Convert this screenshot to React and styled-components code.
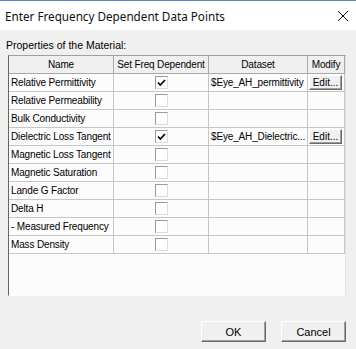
import { Fragment } from 'react';
import styled, { createGlobalStyle } from 'styled-components';

const GlobalStyle = createGlobalStyle`
	html, body {
		margin: 0;
		padding: 0;
		background: #f0f0f0;
	}
	* {
		box-sizing: border-box;
	}
`;

const materialRows = [
	{ name: 'Relative Permittivity', checked: true, dataset: '$Eye_AH_permittivity' },
	{ name: 'Relative Permeability' },
	{ name: 'Bulk Conductivity' },
	{ name: 'Dielectric Loss Tangent', checked: true, dataset: '$Eye_AH_Dielectric...' },
	{ name: 'Magnetic Loss Tangent' },
	{ name: 'Magnetic Saturation' },
	{ name: 'Lande G Factor' },
	{ name: 'Delta H' },
	{ name: '-  Measured Frequency' },
	{ name: 'Mass Density' },
];

// window frame
const Dialog = styled.div`
	width: 356px;
	height: 349px;
	display: flex;
	flex-direction: column;
	background: #f0f0f0;
	overflow: hidden;
`;

const TitleBar = styled.div`
	height: 30px;
	flex: none;
	display: flex;
	align-items: center;
	justify-content: space-between;
	padding: 0 4px 0 5px;
	background: #ffffff;
	border-top: 1px solid #5a8bbd;
	font-family: 'Noto Sans', 'Open Sans', sans-serif;
	font-size: 11.7px;
	color: #111;
`;

const CloseIcon = styled.svg`
	width: 10px;
	height: 10px;
	margin-right: 4px;
	stroke: #111;
	stroke-width: 1;
`;

const Body = styled.div`
	flex: 1;
	display: flex;
	flex-direction: column;
	padding: 9px 10px 7px 8px;
	font-family: 'Liberation Sans', Arial, sans-serif;
	font-size: 10px;
	color: #000;
`;

const GroupLabel = styled.div`
	height: 13px;
	line-height: 13px;
	margin-left: -2px;
	margin-bottom: 3px;
	font-size: 10.5px;
`;

// grid control
const GridPanel = styled.div`
	width: 338px;
	height: 241px;
	background: #fcfcfc;
	border-left: 1px solid #646464;
	border-top: 1px solid #a0a0a0;
	border-right: 1px solid #e3e3e3;
	border-bottom: 1px solid #ffffff;
`;

const Grid = styled.div`
	display: grid;
	grid-template-columns: 105px 95px 99px 37px;
	grid-auto-rows: 18px;
`;

const Cell = styled.div`
	display: flex;
	align-items: center;
	justify-content: ${({ $center }) => ($center ? 'center' : 'flex-start')};
	padding: 0 2px;
	border-right: 1px solid #c6c6c6;
	border-bottom: 1px solid #c6c6c6;
	white-space: nowrap;
	overflow: hidden;
	letter-spacing: -0.15px;
`;

const HeaderCell = styled(Cell)`
	justify-content: center;
	background: #f0f0f0;
	border-bottom-color: #a8a8a8;
	border-right-color: #a8a8a8;
`;

const CheckBox = styled.div`
	width: 13px;
	height: 13px;
	background: #ffffff;
	border-top: 1px solid #9a9a9a;
	border-left: 1px solid #9a9a9a;
	border-right: 1px solid #dcdcdc;
	border-bottom: 1px solid #dcdcdc;
	display: flex;
	align-items: center;
	justify-content: center;
`;

const EditButton = styled.button`
	width: 35px;
	height: 15px;
	padding: 0;
	margin-left: -1px;
	font-family: inherit;
	font-size: 10px;
	color: #000;
	background: #f0f0f0;
	border-top: 1px solid #ffffff;
	border-left: 1px solid #ffffff;
	border-right: 1px solid #6a6a6a;
	border-bottom: 1px solid #6a6a6a;
	box-shadow: inset -1px -1px 0 #a0a0a0;
`;

// footer buttons
const Footer = styled.div`
	margin-top: auto;
	display: flex;
	justify-content: flex-end;
	gap: 15px;
`;

const DialogButton = styled.button`
	width: 65px;
	height: 21px;
	font-family: 'Liberation Sans', Arial, sans-serif;
	font-size: 11px;
	color: #000;
	background: #f0f0f0;
	border-top: 1px solid #ffffff;
	border-left: 1px solid #ffffff;
	border-right: 1px solid #6a6a6a;
	border-bottom: 1px solid #6a6a6a;
	box-shadow: inset -1px -1px 0 #a0a0a0;
`;

const Check = () => (
	<svg width="9" height="8" viewBox="0 0 9 8">
		<path d="M1 3.5 L3.3 6 L8 1" fill="none" stroke="#000" strokeWidth="1.7" />
	</svg>
);

const App = () => {
	return (
		<>
			<GlobalStyle />
			<Dialog>
				<TitleBar>
					<span>Enter Frequency Dependent Data Points</span>
					<CloseIcon viewBox="0 0 10 10">
						<path d="M0 0 L10 10 M10 0 L0 10" />
					</CloseIcon>
				</TitleBar>
				<Body>
					<GroupLabel>Properties of the Material:</GroupLabel>
					<GridPanel>
						<Grid>
							<HeaderCell>Name</HeaderCell>
							<HeaderCell>Set Freq Dependent</HeaderCell>
							<HeaderCell>Dataset</HeaderCell>
							<HeaderCell>Modify</HeaderCell>
							{/* one grid line per material property */}
							{materialRows.map((row) => (
								<Fragment key={row.name}>
									<Cell>{row.name}</Cell>
									<Cell $center>
										<CheckBox>{row.checked && <Check />}</CheckBox>
									</Cell>
									<Cell>{row.dataset}</Cell>
									<Cell $center>{row.dataset && <EditButton>Edit...</EditButton>}</Cell>
								</Fragment>
							))}
						</Grid>
					</GridPanel>
					<Footer>
						<DialogButton>OK</DialogButton>
						<DialogButton>Cancel</DialogButton>
					</Footer>
				</Body>
			</Dialog>
		</>
	);
};

export default App;
